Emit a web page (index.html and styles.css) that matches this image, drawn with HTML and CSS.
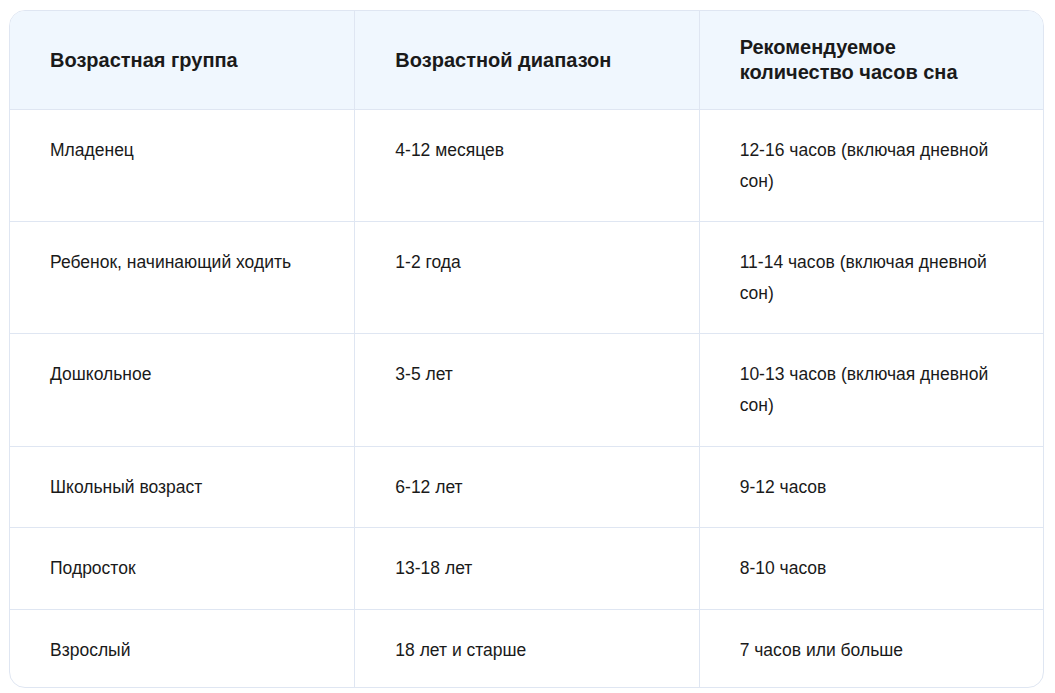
FILE: index.html
```html
<!DOCTYPE html>
<html lang="ru">
<head>
<meta charset="utf-8">
<link rel="stylesheet" href="styles.css">
</head>
<body>
<div class="wrap">
<table class="sleep">
<thead>
<tr>
<th>Возрастная группа</th>
<th>Возрастной диапазон</th>
<th>Рекомендуемое количество часов сна</th>
</tr>
</thead>
<tbody>
<tr><td>Младенец</td><td>4-12 месяцев</td><td>12-16 часов (включая дневной сон)</td></tr>
<tr><td>Ребенок, начинающий ходить</td><td>1-2 года</td><td>11-14 часов (включая дневной сон)</td></tr>
<tr><td>Дошкольное</td><td>3-5 лет</td><td>10-13 часов (включая дневной сон)</td></tr>
<tr><td>Школьный возраст</td><td>6-12 лет</td><td>9-12 часов</td></tr>
<tr><td>Подросток</td><td>13-18 лет</td><td>8-10 часов</td></tr>
<tr><td>Взрослый</td><td>18 лет и старше</td><td>7 часов или больше</td></tr>
</tbody>
</table>
</div>
</body>
</html>
```
FILE: styles.css
```css
html, body {
  margin: 0;
  padding: 0;
  background: #ffffff;
}
body {
  font-family: "Liberation Sans", Arial, sans-serif;
  color: #1a1a1a;
}
.wrap {
  padding: 10px 11px 0 9px;
}
.sleep {
  width: 100%;
  border-collapse: separate;
  border-spacing: 0;
  table-layout: fixed;
  border: 1px solid #dfe6f2;
  border-radius: 16px;
  overflow: hidden;
}
.sleep th {
  background: #f0f7fe;
  font-size: 20px;
  font-weight: 700;
  line-height: 25px;
  text-align: left;
  vertical-align: middle;
  padding: 24px 40px;
  border-bottom: 1px solid #dfe6f2;
}
.sleep td {
  font-size: 17.5px;
  line-height: 30.6px;
  vertical-align: top;
  padding: 25px 40px;
  border-bottom: 1px solid #dfe6f2;
}
.sleep th + th,
.sleep td + td {
  border-left: 1px solid #dfe6f2;
}
.sleep tbody tr:last-child td {
  border-bottom: none;
  padding-bottom: 22px;
}
```
